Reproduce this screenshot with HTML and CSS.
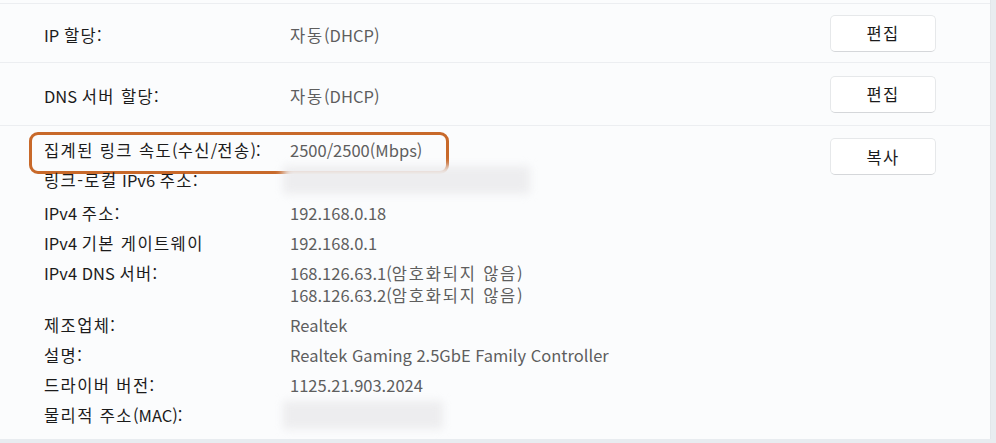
FILE: index.html
```html
<!DOCTYPE html>
<html lang="ko">
<head>
<meta charset="utf-8">
<link rel="stylesheet" href="styles.css">
</head>
<body>
<div class="panel">
  <div class="row single first">
    <div class="label">IP <span class="k">할당</span>:</div>
    <div class="value"><span class="k">자동</span>(DHCP)</div>
    <button class="btn"><span class="k">편집</span></button>
  </div>
  <div class="row single second">
    <div class="label">DNS <span class="k">서버 할당</span>:</div>
    <div class="value"><span class="k">자동</span>(DHCP)</div>
    <button class="btn"><span class="k">편집</span></button>
  </div>
  <div class="row details">
    <div class="grid">
      <div class="pair highlight">
        <div class="label"><span class="k">집계된 링크 속도</span>(<span class="k">수신</span>/<span class="k">전송</span>):</div>
        <div class="value">2500/2500(Mbps)</div>
      </div>
      <div class="pair">
        <div class="label"><span class="k">링크-로컬</span> IPv6 <span class="k">주소</span>:</div>
        <div class="value"><span class="blur wide"></span></div>
      </div>
      <div class="pair">
        <div class="label">IPv4 <span class="k">주소</span>:</div>
        <div class="value">192.168.0.18</div>
      </div>
      <div class="pair">
        <div class="label">IPv4 <span class="k">기본 게이트웨이</span></div>
        <div class="value">192.168.0.1</div>
      </div>
      <div class="pair">
        <div class="label">IPv4 DNS <span class="k">서버</span>:</div>
        <div class="value">168.126.63.1(<span class="k">암호화되지 않음</span>)<br>168.126.63.2(<span class="k">암호화되지 않음</span>)</div>
      </div>
      <div class="pair">
        <div class="label"><span class="k">제조업체</span>:</div>
        <div class="value">Realtek</div>
      </div>
      <div class="pair">
        <div class="label"><span class="k">설명</span>:</div>
        <div class="value">Realtek Gaming 2.5GbE Family Controller</div>
      </div>
      <div class="pair">
        <div class="label"><span class="k">드라이버 버전</span>:</div>
        <div class="value">1125.21.903.2024</div>
      </div>
      <div class="pair">
        <div class="label"><span class="k">물리적 주소</span>(MAC):</div>
        <div class="value"><span class="blur narrow"></span></div>
      </div>
    </div>
    <button class="btn copy"><span class="k">복사</span></button>
  </div>
</div>
</body>
</html>
```

FILE: styles.css
```css
* { box-sizing: border-box; }
html, body { margin: 0; padding: 0; }
body {
  background: #e8ecf0;
  font-family: "Noto Sans CJK KR", "Noto Sans", sans-serif;
  font-size: 16.5px;
  color: #1b1b1b;
  width: 996px;
  height: 443px;
  overflow: hidden;
}
.k { letter-spacing: 1.4px; }
.value .k { letter-spacing: 1.8px; }
.panel {
  width: 991px;
  height: 439px;
  background: #fbfcfd;
  padding-top: 3px;
  border-right: 1px solid #e2e6ea;
}
.row {
  display: flex;
  border-top: 1px solid #eceef1;
  position: relative;
}
.row.single { align-items: center; }
.row.single .label,
.row.single .value { padding-top: 4px; }
.row.first { height: 59px; }
.row.second { height: 63px; }
.label {
  width: 246px;
  margin-left: 44px;
  flex: none;
  line-height: 22px;
  white-space: nowrap;
}
.value {
  color: #5e5e5e;
  line-height: 22px;
  white-space: nowrap;
  flex: 1;
}
.btn {
  font: inherit;
  color: #1b1b1b;
  width: 106px;
  height: 37px;
  background: #ffffff;
  border: 1px solid #e6e8ea;
  border-bottom-color: #d5d7da;
  border-radius: 5px;
  margin-right: 54px;
  flex: none;
  padding: 0;
}
.row.details {
  align-items: flex-start;
  padding-top: 12px;
}
.grid {
  flex: 1;
  display: flex;
  flex-direction: column;
  gap: 8px;
  margin-top: 1px;
}
.pair {
  display: flex;
  position: relative;
}
.highlight::after {
  content: "";
  position: absolute;
  left: 29px;
  top: -7px;
  width: 414px;
  height: 36px;
  border: 3px solid #c8692a;
  border-radius: 9px;
}
.blur {
  display: block;
  height: 28px;
  margin-top: -3px;
  margin-left: -7px;
  background: #ededef;
  filter: blur(4px);
  border-radius: 4px;
}
.blur.wide { width: 247px; }
.blur.narrow { width: 160px; }
```
